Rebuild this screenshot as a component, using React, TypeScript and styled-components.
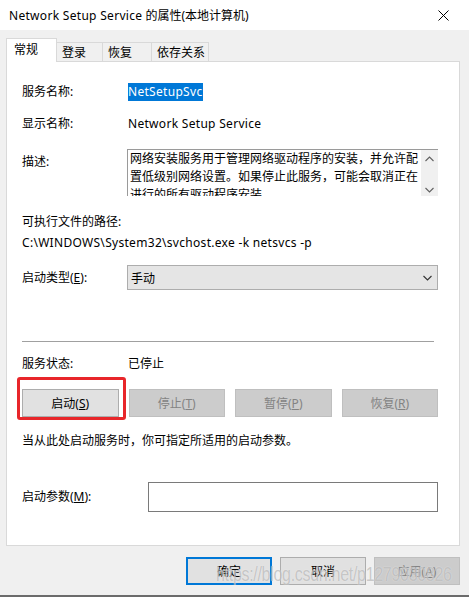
import React from 'react';
import styled, {createGlobalStyle} from 'styled-components';

const Global = createGlobalStyle`
  body {
    margin: 0;
    background: #ffffff;
    font-family: "Noto Sans", "Noto Sans CJK SC", sans-serif;
    font-size: 12px;
    color: #000;
  }
`

const Window = styled.div`
  position: relative;
  width: 469px;
  height: 597px;
  box-sizing: border-box;
  background: #f0f0f0;
  border-bottom: 2px solid #6b6b6b;
  display: flex;
  flex-direction: column;
  overflow: hidden;
`

const TitleBar = styled.div`
  height: 30px;
  flex-shrink: 0;
  background: #ffffff;
  display: flex;
  align-items: center;
  justify-content: space-between;
  padding: 0 3px 0 9px;
  font-size: 12px;
`

const CloseBtn = styled.div`
  width: 46px;
  height: 30px;
  display: flex;
  align-items: center;
  justify-content: center;
`

// latin runs are a bit wider in the original (Segoe UI)
const Latin = styled.span`
  letter-spacing: 0.3px;
`

const TabStrip = styled.div`
  display: flex;
  align-items: flex-end;
  height: 23px;
  margin: 9px 0 -1px 6px;
  position: relative;
  z-index: 1;
`

const Tab = styled.div<{ $active?: boolean; $w: number }>`
  box-sizing: border-box;
  width: ${p => p.$w}px;
  height: ${p => (p.$active ? 24 : 20)}px;
  margin-left: ${p => (p.$active ? 0 : -1)}px;
  padding-left: ${p => (p.$active ? 7 : 5)}px;
  padding-bottom: ${p => (p.$active ? 4 : 0)}px;
  display: flex;
  align-items: center;
  background: ${p => (p.$active ? '#ffffff' : '#f0f0f0')};
  border: 1px solid #d9d9d9;
  border-bottom: ${p => (p.$active ? 'none' : '1px solid #d9d9d9')};
  &:first-child { margin-left: 0; }
`

const Panel = styled.div`
  box-sizing: border-box;
  height: 485px;
  margin: 0 9px 0 6px;
  background: #ffffff;
  border: 1px solid #d9d9d9;
  padding: 21px 21px 0 15px;
  display: flex;
  flex-direction: column;
`

const Row = styled.div<{ $mt?: number; $label?: number; $top?: boolean }>`
  display: grid;
  grid-template-columns: ${p => p.$label ?? 106}px 1fr;
  align-items: ${p => (p.$top ? 'start' : 'center')};
  min-height: 18px;
  margin-top: ${p => p.$mt ?? 0}px;
`

const Line = styled.div<{ $mt?: number }>`
  height: 18px;
  line-height: 18px;
  margin-top: ${p => p.$mt ?? 0}px;
  white-space: nowrap;
`

const Label = styled.div<{ $pt?: number }>`
  line-height: 18px;
  padding-top: ${p => p.$pt ?? 0}px;
  white-space: nowrap;
`

const Selected = styled.span`
  display: inline-block;
  background: #0078d7;
  color: #ffffff;
  line-height: 18px;
  padding: 0 1px 0 0;
`

const DescBox = styled.div`
  display: flex;
  height: 46px;
  margin-left: -1px;
  border-top: 1px solid #9a9a9a;
  border-left: 1px solid #9a9a9a;
  overflow: hidden;
`

const DescText = styled.div`
  flex: 1;
  padding-left: 2px;
  line-height: 18px;
  white-space: nowrap;
`

const ScrollBar = styled.div`
  width: 17px;
  flex-shrink: 0;
  background: #f0f0f0;
  display: flex;
  flex-direction: column;
  justify-content: space-between;
  align-items: center;
  padding: 6px 0 3px;
`

const Combo = styled.div`
  box-sizing: border-box;
  height: 25px;
  margin-left: -1px;
  background: #e5e5e5;
  border: 1px solid #adadad;
  display: flex;
  align-items: center;
  justify-content: space-between;
  padding: 0 5px 0 3px;
`

const Separator = styled.div`
  height: 1px;
  background: #a0a0a0;
  margin: 51px 4px 0 0;
`

const ButtonGrid = styled.div`
  display: grid;
  grid-template-columns: repeat(4, 1fr);
  column-gap: 10px;
  margin-top: 16px;
`

const Cell = styled.div`
  position: relative;
`

const Btn = styled.div<{ $disabled?: boolean; $default?: boolean; $w?: number }>`
  box-sizing: border-box;
  height: 28px;
  width: ${p => (p.$w ? `${p.$w}px` : 'auto')};
  display: flex;
  align-items: center;
  justify-content: center;
  background: ${p => (p.$disabled ? '#cccccc' : '#e1e1e1')};
  color: ${p => (p.$disabled ? '#838383' : '#000000')};
  border: ${p => (p.$default ? '2px solid #0078d7' : p.$disabled ? '1px solid #bfbfbf' : '1px solid #adadad')};
`

const RedMark = styled.div`
  position: absolute;
  top: -12px;
  left: -5px;
  right: -7px;
  bottom: -3px;
  border: 3px solid #e8262a;
  border-radius: 3px;
  pointer-events: none;
`

const Input = styled.div`
  box-sizing: border-box;
  height: 30px;
  background: #ffffff;
  border: 1px solid #7a7a7a;
`

const Footer = styled.div`
  display: flex;
  justify-content: flex-end;
  gap: 8px;
  margin-top: 11px;
  padding-right: 9px;
`

const Watermark = styled.div`
  position: absolute;
  left: 216px;
  top: 563px;
  font-family: "Liberation Sans", Arial, sans-serif;
  font-size: 16px;
  letter-spacing: -0.3px;
  color: rgba(160, 160, 160, 0.55);
  text-shadow: 0 0 1px rgba(255, 255, 255, 0.7);
  transform: scaleY(1.3);
  transform-origin: left top;
  white-space: nowrap;
  pointer-events: none;
`

const Chevron = ({up, color = '#606060'}: { up?: boolean; color?: string }) => (
    <svg width="9" height="6" viewBox="0 0 9 6">
        <polyline
            points={up ? '0.5,5 4.5,1 8.5,5' : '0.5,1 4.5,5 8.5,1'}
            fill="none"
            stroke={color}
            strokeWidth="1.1"
        />
    </svg>
)

export default function App() {
    return (
        <Window>
            <Global/>
            <TitleBar>
                <span><Latin>Network Setup Service</Latin> 的属性(本地计算机)</span>
                <CloseBtn>
                    <svg width="11" height="11" viewBox="0 0 11 11">
                        <path d="M0.5 0.5 L10.5 10.5 M10.5 0.5 L0.5 10.5" stroke="#000" strokeWidth="1"/>
                    </svg>
                </CloseBtn>
            </TitleBar>

            <TabStrip>
                <Tab $active $w={51}>常规</Tab>
                <Tab $w={47}>登录</Tab>
                <Tab $w={50}>恢复</Tab>
                <Tab $w={58}>依存关系</Tab>
            </TabStrip>

            <Panel>
                <Row>
                    <Label>服务名称:</Label>
                    <div><Selected><Latin>NetSetupSvc</Latin></Selected></div>
                </Row>
                <Row $mt={14}>
                    <Label>显示名称:</Label>
                    <Line><Latin>Network Setup Service</Latin></Line>
                </Row>
                <Row $mt={16} $top>
                    <Label $pt={4}>描述:</Label>
                    <DescBox>
                        <DescText>
                            网络安装服务用于管理网络驱动程序的安装，并允许配<br/>
                            置低级别网络设置。如果停止此服务，可能会取消正在<br/>
                            进行的所有驱动程序安装
                        </DescText>
                        <ScrollBar>
                            <Chevron up/>
                            <Chevron/>
                        </ScrollBar>
                    </DescBox>
                </Row>
                <Line $mt={17}>可执行文件的路径:</Line>
                <Line $mt={3}><Latin>C:\WINDOWS\System32\svchost.exe -k netsvcs -p</Latin></Line>
                <Row $mt={13}>
                    <Label>启动类型(<u>E</u>):</Label>
                    <Combo>
                        <span>手动</span>
                        <Chevron color="#333"/>
                    </Combo>
                </Row>

                <Separator/>

                <Row $mt={13}>
                    <Label>服务状态:</Label>
                    <Line>已停止</Line>
                </Row>
                <ButtonGrid>
                    <Cell>
                        <Btn>启动(<u>S</u>)</Btn>
                        <RedMark/>
                    </Cell>
                    <Cell><Btn $disabled>停止(<u>T</u>)</Btn></Cell>
                    <Cell><Btn $disabled>暂停(<u>P</u>)</Btn></Cell>
                    <Cell><Btn $disabled>恢复(<u>R</u>)</Btn></Cell>
                </ButtonGrid>
                <Line $mt={15}>当从此处启动服务时，你可指定所适用的启动参数。</Line>
                <Row $mt={32} $label={126}>
                    <Label>启动参数(<u>M</u>):</Label>
                    <Input/>
                </Row>
            </Panel>

            <Footer>
                <Btn $default $w={86}>确定</Btn>
                <Btn $w={86}>取消</Btn>
                <Btn $disabled $w={86}>应用(<u>A</u>)</Btn>
            </Footer>

            <Watermark>https://blog.csdn.net/p1279030826</Watermark>
        </Window>
    );
}
